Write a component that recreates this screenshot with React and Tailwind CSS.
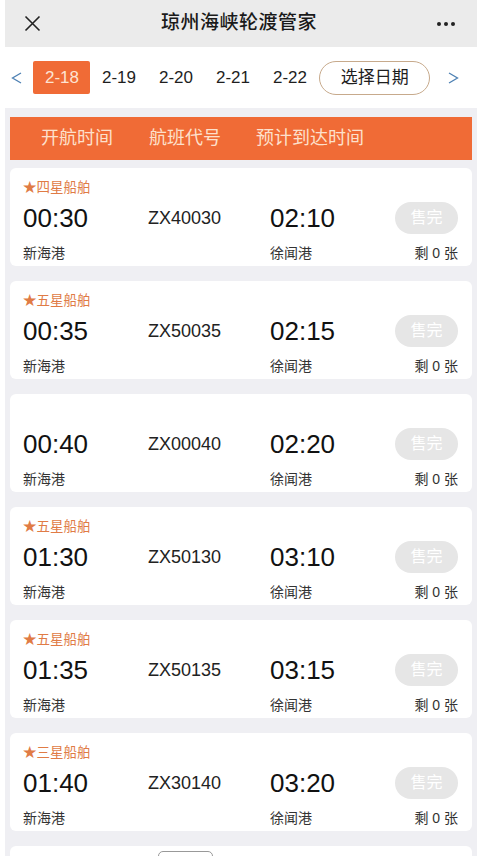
import React from 'react';

const FONT = { fontFamily: '"Liberation Sans", "Noto Sans CJK SC", sans-serif' };

const dates = ['2-18', '2-19', '2-20', '2-21', '2-22'];

const trips = [
  { label: '★四星船舶', dep: '00:30', code: 'ZX40030', arr: '02:10' },
  { label: '★五星船舶', dep: '00:35', code: 'ZX50035', arr: '02:15' },
  { label: '', dep: '00:40', code: 'ZX00040', arr: '02:20' },
  { label: '★五星船舶', dep: '01:30', code: 'ZX50130', arr: '03:10' },
  { label: '★五星船舶', dep: '01:35', code: 'ZX50135', arr: '03:15' },
  { label: '★三星船舶', dep: '01:40', code: 'ZX30140', arr: '03:20' },
];

const TripCard = ({ trip, first }) => (
  <div className={`mx-[5px] ${first ? 'mt-[8px]' : 'mt-[15px]'} h-[98px] shrink-0 rounded-[6px] bg-white pl-[13px] pr-[14px] pt-[10px]`}>
    <div className="h-[20px] text-[13.5px] leading-[20px] text-[#e07b45]">{trip.label}</div>
    <div className="mt-[5px] flex h-[30px] items-center">
      <div className="w-[125px] text-[26px] leading-none text-[#111]">{trip.dep}</div>
      <div className="w-[122px] text-[18px] leading-none text-[#222]">{trip.code}</div>
      <div className="flex-1 text-[26px] leading-none text-[#111]">{trip.arr}</div>
      <div className="flex h-[32px] w-[63px] items-center justify-center rounded-full bg-[#e6e6e6] text-[16px] text-white">售完</div>
    </div>
    <div className="mt-[10px] flex h-[20px] items-center text-[14px] text-[#333]">
      <div className="w-[247px]">新海港</div>
      <div className="flex-1">徐闻港</div>
      <div>剩 0 张</div>
    </div>
  </div>
);

const App = () => {
  return (
    <div className="h-[856px] w-[489px] overflow-hidden bg-white" style={FONT}>
      <div className="ml-[5px] flex h-full w-[472px] flex-col">
        {/* top bar */}
        <header className="flex h-[47px] shrink-0 items-center justify-between bg-[#ebebeb] px-[19px]">
          <svg width="17" height="17" viewBox="0 0 17 17" className="text-[#222]">
            <path d="M1.5 1.5 L15.5 15.5 M15.5 1.5 L1.5 15.5" stroke="currentColor" strokeWidth="1.6" fill="none" />
          </svg>
          <h1 className="text-[19px] font-medium tracking-[0.5px] text-[#1a1a1a]">琼州海峡轮渡管家</h1>
          <div className="flex gap-[3px] pr-[3px]">
            <span className="h-[4px] w-[4px] rounded-full bg-[#222]" />
            <span className="h-[4px] w-[4px] rounded-full bg-[#222]" />
            <span className="h-[4px] w-[4px] rounded-full bg-[#222]" />
          </div>
        </header>

        {/* date bar */}
        <div className="flex h-[61px] shrink-0 items-center">
          <div className="flex w-[24px] justify-center">
            <svg width="11" height="12" viewBox="0 0 11 12">
              <path d="M10 1 L1.5 6 L10 11" stroke="#4d80b3" strokeWidth="1.3" fill="none" />
            </svg>
          </div>
          <div className="ml-[5px] flex">
            {dates.map((d, i) => (
              <div
                key={d}
                className={`flex h-[33px] w-[57px] items-center justify-center rounded-[2px] text-[17px] ${i === 0 ? 'bg-[#f06b36] text-[#fde3d3]' : 'text-[#1e1e1e]'}`}
              >
                {d}
              </div>
            ))}
          </div>
          <div className="ml-[1px] flex h-[34px] w-[113px] items-center justify-center rounded-full border border-[#c7aa8c] text-[17px] text-[#1e1e1e]">
            选择日期
          </div>
          <div className="flex w-[48px] justify-center">
            <svg width="11" height="12" viewBox="0 0 11 12">
              <path d="M1 1 L9.5 6 L1 11" stroke="#4d80b3" strokeWidth="1.3" fill="none" />
            </svg>
          </div>
        </div>

        {/* list */}
        <div className="flex flex-1 flex-col bg-[#efeff3] pt-[9px]">
          <div className="mx-[5px] flex h-[43px] shrink-0 items-center bg-[#f06b36] pl-[31px] text-[18px] text-[#fde0cc]">
            <div className="w-[108px]">开航时间</div>
            <div className="w-[107px]">航班代号</div>
            <div>预计到达时间</div>
          </div>

          {trips.map((t, i) => (
            <TripCard key={t.code} trip={t} first={i === 0} />
          ))}

          <div className="mx-[5px] mt-[15px] h-[40px] shrink-0 rounded-[6px] bg-white pt-[5px]">
            <div className="ml-[148px] h-[22px] w-[55px] rounded-[5px] border border-[#999]" />
          </div>
        </div>
      </div>
    </div>
  );
};

export default App;
